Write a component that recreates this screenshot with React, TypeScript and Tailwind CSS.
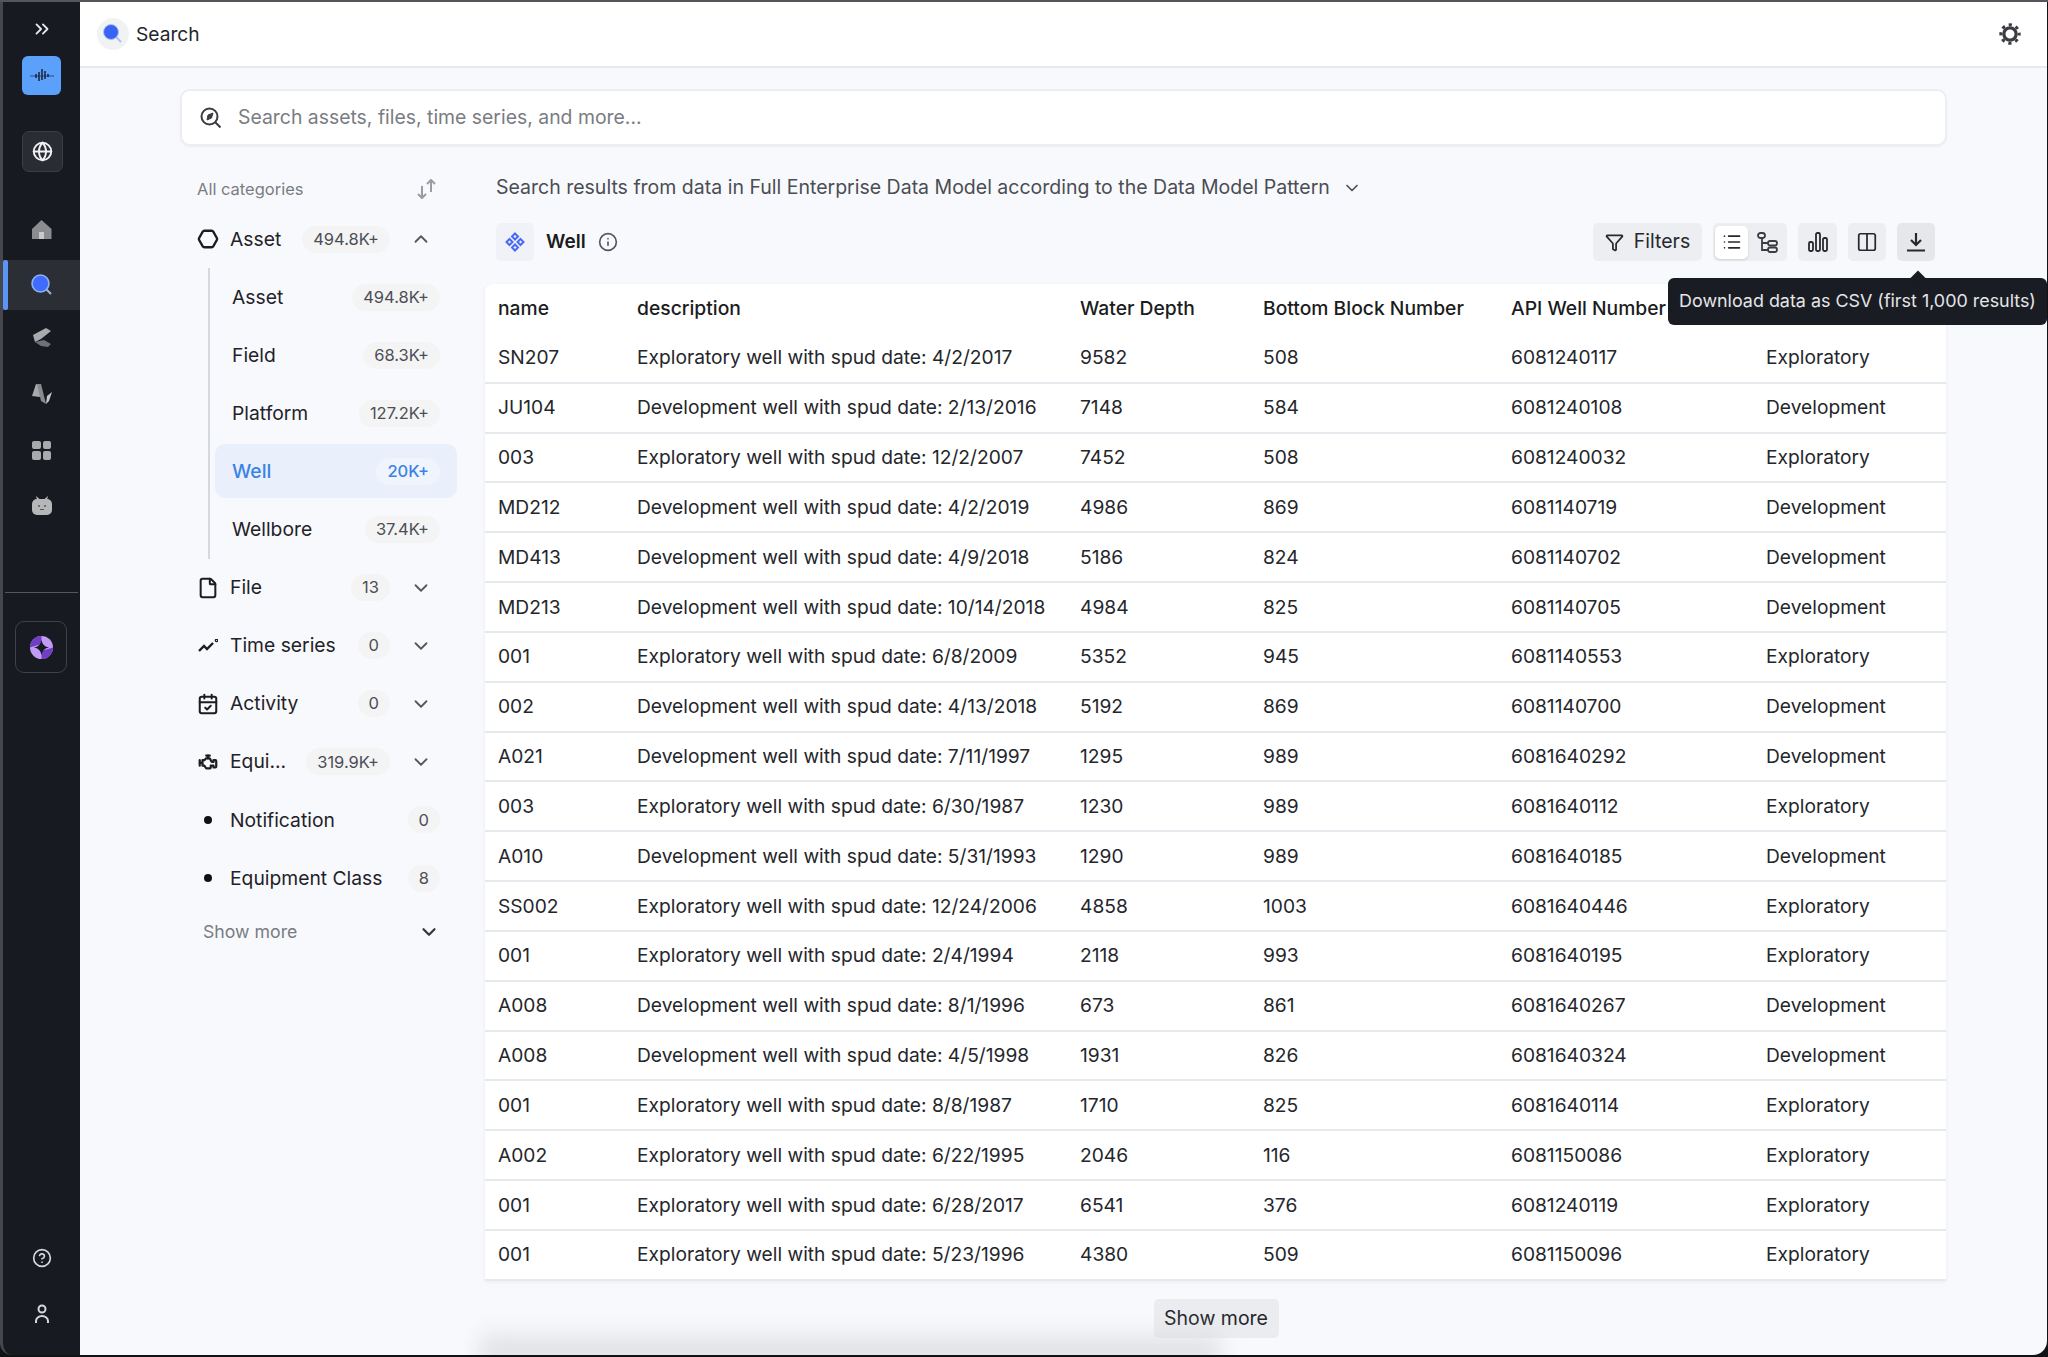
import { ChevronDown, ChevronUp, ChevronsRight, CalendarCheck, CircleHelp, Columns2, File, Filter, Globe, Hexagon, Info, List } from "lucide-react";
import { TbEngine } from "react-icons/tb";

type Well = [string, string, string, string, string, string];

const wells: Well[] = [
  ["SN207", "Exploratory well with spud date: 4/2/2017", "9582", "508", "6081240117", "Exploratory"],
  ["JU104", "Development well with spud date: 2/13/2016", "7148", "584", "6081240108", "Development"],
  ["003", "Exploratory well with spud date: 12/2/2007", "7452", "508", "6081240032", "Exploratory"],
  ["MD212", "Development well with spud date: 4/2/2019", "4986", "869", "6081140719", "Development"],
  ["MD413", "Development well with spud date: 4/9/2018", "5186", "824", "6081140702", "Development"],
  ["MD213", "Development well with spud date: 10/14/2018", "4984", "825", "6081140705", "Development"],
  ["001", "Exploratory well with spud date: 6/8/2009", "5352", "945", "6081140553", "Exploratory"],
  ["002", "Development well with spud date: 4/13/2018", "5192", "869", "6081140700", "Development"],
  ["A021", "Development well with spud date: 7/11/1997", "1295", "989", "6081640292", "Development"],
  ["003", "Exploratory well with spud date: 6/30/1987", "1230", "989", "6081640112", "Exploratory"],
  ["A010", "Development well with spud date: 5/31/1993", "1290", "989", "6081640185", "Development"],
  ["SS002", "Exploratory well with spud date: 12/24/2006", "4858", "1003", "6081640446", "Exploratory"],
  ["001", "Exploratory well with spud date: 2/4/1994", "2118", "993", "6081640195", "Exploratory"],
  ["A008", "Development well with spud date: 8/1/1996", "673", "861", "6081640267", "Development"],
  ["A008", "Development well with spud date: 4/5/1998", "1931", "826", "6081640324", "Development"],
  ["001", "Exploratory well with spud date: 8/8/1987", "1710", "825", "6081640114", "Exploratory"],
  ["A002", "Exploratory well with spud date: 6/22/1995", "2046", "116", "6081150086", "Exploratory"],
  ["001", "Exploratory well with spud date: 6/28/2017", "6541", "376", "6081240119", "Exploratory"],
  ["001", "Exploratory well with spud date: 5/23/1996", "4380", "509", "6081150096", "Exploratory"],
];

const subCategories = [
  { name: "Asset", count: "494.8K+" },
  { name: "Field", count: "68.3K+" },
  { name: "Platform", count: "127.2K+" },
  { name: "Well", count: "20K+", active: true },
  { name: "Wellbore", count: "37.4K+" },
];

function Badge({ children, active }: { children: React.ReactNode; active?: boolean }) {
  return (
    <span
      className={`flex h-[27px] min-w-[32px] items-center justify-center rounded-full px-[11px] text-[16.5px] ${
        active ? "bg-[#eff4fd] text-[#3b82e6]" : "bg-[#f4f4f5] text-[#4b4f55]"
      }`}
    >
      {children}
    </span>
  );
}

function CategoryRow({ icon, label, count, open }: { icon: React.ReactNode; label: string; count: string; open?: boolean }) {
  return (
    <div className="flex h-[58.1px] items-center pl-[17px] text-[#1f2228]">
      <span className="flex w-[22px] items-center justify-center">{icon}</span>
      <span className="ml-[11px] flex-1 text-[19.3px]">{label}</span>
      <Badge>{count}</Badge>
      <span className="ml-[20px] w-[30px] text-[#55585e]">
        {open ? <ChevronUp size={22} /> : <ChevronDown size={22} />}
      </span>
    </div>
  );
}

function DotRow({ label, count }: { label: string; count: string }) {
  return (
    <div className="flex h-[58.1px] items-center pl-[17px] text-[#1f2228]">
      <span className="flex w-[22px] items-center justify-center">
        <span className="h-[8px] w-[8px] rounded-full bg-[#111]" />
      </span>
      <span className="ml-[11px] flex-1 text-[19.3px]">{label}</span>
      <Badge>{count}</Badge>
    </div>
  );
}

function RailIcon({ children }: { children: React.ReactNode }) {
  return <div className="flex h-[56px] items-center justify-center">{children}</div>;
}

function Sidebar() {
  return (
    <aside className="flex w-[80px] shrink-0 flex-col items-stretch rounded-bl-[12px] border-l-[3px] border-[#45474c] bg-[#181a22]">
      <div className="ml-[1px] flex h-[54px] items-center justify-center text-[#e8e9ec]">
        <ChevronsRight size={22} />
      </div>
      <div className="ml-[19px] flex h-[39px] w-[39px] items-center justify-center rounded-[6px] bg-[#5ba0fb]">
        <svg width="26" height="16" viewBox="0 0 26 16" stroke="#1d2a44" fill="none" strokeWidth="1.6">
          <path d="M1 8h24" strokeWidth="0.7" />
          <path d="M7 6v4M10 4v9M13 1v11M16 3v8M19 6v3" />
        </svg>
      </div>
      <div className="ml-[19px] mt-[36px] flex h-[41px] w-[41px] items-center justify-center rounded-[7px] border border-[#3c3e45] bg-[#2a2c33] text-[#f0f1f3]">
        <Globe size={21} strokeWidth={2.2} />
      </div>
      <div className="mb-[3px] mt-[29px] flex h-[56px] items-center justify-center">
        <svg width="21" height="21" viewBox="0 0 21 21">
          <path d="M10.5 1 L20.5 10 V20 H1 V10 Z" fill="#8b8c8f" />
          <rect x="8" y="13" width="5" height="7" fill="#c9c9cb" />
        </svg>
      </div>
      <div className="relative flex h-[50px] items-center justify-center bg-[#2c2e36]">
        <span className="absolute left-0 top-0 h-full w-[5px] rounded-[2px] bg-[#5b96f5]" />
        <svg width="22" height="22" viewBox="0 0 22 22">
          <path d="M14 14l6 6" stroke="#9db6d8" strokeWidth="2" />
          <circle cx="9.5" cy="9.5" r="8.5" fill="#3f6cff" stroke="#8fb2ee" strokeWidth="1.6" />
        </svg>
      </div>
      <RailIcon>
        <svg width="18" height="20" viewBox="0 0 18 20">
          <path d="M0 7 L13 0 L18 3 L8 11 L2 14 Z" fill="#a9aaad" />
          <path d="M2 14 L11 12 L18 16 L15 19 L8 18 Z" fill="#707175" />
        </svg>
      </RailIcon>
      <RailIcon>
        <svg width="20" height="21" viewBox="0 0 20 21">
          <path d="M0 12 L4 0 L8 1 L8 13 Z" fill="#a9aaad" />
          <path d="M5 0 H9 L14 20 L9 17 Z" fill="#8a8b8e" />
          <path d="M14 20 L15 12 L20 8 L17 17 Z" fill="#c4c5c7" />
        </svg>
      </RailIcon>
      <RailIcon>
        <div className="grid h-[19px] w-[19px] grid-cols-2 gap-[2px]">
          <span className="rounded-[2px] bg-[#a9aaad]" />
          <span className="rounded-[2px] bg-[#a9aaad]" />
          <span className="rounded-[2px] bg-[#a9aaad]" />
          <span className="rounded-[2px] bg-[#a9aaad]" />
        </div>
      </RailIcon>
      <RailIcon>
        <svg width="20" height="20" viewBox="0 0 20 20">
          <path d="M5 4 L4 0 L7.5 3 H12.5 L16 0 L15 4 Z" fill="#b5b6b8" />
          <rect x="0" y="3" width="20" height="16" rx="5" fill="#b5b6b8" />
          <circle cx="7" cy="10" r="1" fill="#55565a" />
          <circle cx="13" cy="10" r="1" fill="#55565a" />
          <path d="M8 13.5h4" stroke="#55565a" strokeWidth="1" />
        </svg>
      </RailIcon>
      <div className="ml-[2px] mt-[58px] h-[1px] w-[73px] bg-[#55575c]" />
      <div className="ml-[12px] mt-[28px] flex h-[52px] w-[52px] items-center justify-center rounded-[9px] border border-[#3f4148]">
        <svg width="23" height="23" viewBox="0 0 23 23">
          <circle cx="11.5" cy="11.5" r="11.5" fill="#c19bf5" />
          <path d="M0 11.5 A11.5 11.5 0 0 1 11.5 0 L11.5 8 Z" fill="#6e3fc4" />
          <path d="M23 11.5 A11.5 11.5 0 0 1 11.5 23 L11.5 15 Z" fill="#6e3fc4" />
          <path d="M11.5 4 Q12.5 10.5 19 11.5 Q12.5 12.5 11.5 19 Q10.5 12.5 4 11.5 Q10.5 10.5 11.5 4Z" fill="#181a22" />
        </svg>
      </div>
      <div className="flex-1" />
      <div className="flex h-[56px] items-center justify-center text-[#d6d7da]">
        <CircleHelp size={20} />
      </div>
      <div className="flex h-[56px] items-center justify-center">
        <svg width="16" height="20" viewBox="0 0 16 20" fill="none" stroke="#d6d7da" strokeWidth="2">
          <circle cx="8" cy="5" r="3.5" />
          <path d="M2 19v-2a6 5 0 0 1 12 0v2" />
        </svg>
      </div>
      <div className="h-[13px]" />
    </aside>
  );
}

function CategoryPanel() {
  return (
    <div className="w-[305px] shrink-0 pt-[24px]">
      <div className="w-[260px]">
        <div className="flex h-[40px] items-center justify-between pb-[2px] pl-[17px] pr-[4px] text-[#7a7d83]">
          <span className="text-[16.5px]">All categories</span>
          <svg width="20" height="20" viewBox="0 0 20 20" fill="none" stroke="#9a9ca1" strokeWidth="2">
            <path d="M6 7v12M2 15l4 4 4-4" />
            <path d="M15 13V1M11 5l4-4 4 4" />
          </svg>
        </div>
        <CategoryRow label="Asset" count="494.8K+" open icon={<Hexagon size={22} strokeWidth={2.5} className="rotate-90 text-[#1b1d21]" />} />
      </div>
      <div className="ml-[28px] flex w-[249px] flex-col gap-[4px] border-l-2 border-[#d5d8df] py-[2px]">
        {subCategories.map((c) => (
          <div
            key={c.name}
            className={`ml-[5px] flex h-[54.1px] w-[242px] items-center justify-between rounded-[10px] pl-[17px] pr-[17px] text-[19.3px] ${
              c.active ? "bg-[#e9f0fc] font-medium text-[#3b82e6]" : "text-[#1f2228]"
            }`}
          >
            <span>{c.name}</span>
            <Badge active={c.active}>{c.count}</Badge>
          </div>
        ))}
      </div>
      <div className="w-[260px]">
        <CategoryRow label="File" count="13" icon={<File size={22} strokeWidth={2.2} className="text-[#1b1d21]" />} />
        <CategoryRow
          label="Time series"
          count="0"
          icon={
            <svg width="20" height="14" viewBox="0 0 20 14" fill="none" stroke="#1b1d21" strokeWidth="2.4">
              <path d="M1 12l5-5 3 3 6-6" />
              <circle cx="18.5" cy="1.5" r="0.6" />
            </svg>
          }
        />
        <CategoryRow label="Activity" count="0" icon={<CalendarCheck size={22} strokeWidth={2.2} className="text-[#1b1d21]" />} />
        <CategoryRow label="Equi..." count="319.9K+" icon={<TbEngine size={22} strokeWidth={2.4} className="text-[#1b1d21]" />} />
        <DotRow label="Notification" count="0" />
        <DotRow label="Equipment Class" count="8" />
        <div className="flex h-[50px] items-center justify-between pl-[23px] text-[17.7px] text-[#797c82]">
          <span>Show more</span>
          <ChevronDown size={22} strokeWidth={2.4} className="text-[#33363b]" />
        </div>
      </div>
    </div>
  );
}

function Toolbar() {
  return (
    <div className="flex items-center gap-[11px] text-[#26282d]">
      <div className="flex h-[38px] w-[109px] items-center justify-center gap-[10px] rounded-[5px] bg-[#eceef1] text-[19.5px]">
        <Filter size={19} strokeWidth={2.2} />
        <span>Filters</span>
      </div>
      <div className="flex h-[38px] w-[74px] items-center rounded-[5px] bg-[#eceef1] pl-[2px]">
        <div className="flex h-[33px] w-[33px] items-center justify-center rounded-[5px] bg-white shadow-sm">
          <List size={20} />
        </div>
        <div className="flex flex-1 items-center justify-center text-[#3a3c41]">
          <svg width="21" height="21" viewBox="0 0 21 21" fill="none" stroke="currentColor" strokeWidth="1.8">
            <rect x="1" y="1" width="7" height="5" rx="2.5" />
            <rect x="11" y="9" width="9" height="4.5" rx="2.2" />
            <rect x="11" y="15.5" width="9" height="4.5" rx="2.2" />
            <path d="M5 6v12h6M5 11h6" />
          </svg>
        </div>
      </div>
      <div className="flex h-[38px] w-[39px] items-center justify-center rounded-[5px] bg-[#eceef1]">
        <svg width="20" height="20" viewBox="0 0 20 20" fill="none" stroke="currentColor" strokeWidth="1.8">
          <rect x="1" y="10" width="4" height="9" rx="1.5" />
          <rect x="8" y="1" width="4" height="18" rx="1.5" />
          <rect x="15" y="6" width="4" height="13" rx="1.5" />
        </svg>
      </div>
      <div className="flex h-[38px] w-[38px] items-center justify-center rounded-[5px] bg-[#eceef1]">
        <Columns2 size={22} strokeWidth={1.9} />
      </div>
      <div className="flex h-[38px] w-[38px] items-center justify-center rounded-[5px] bg-[#e6e7ea]">
        <svg width="20" height="20" viewBox="0 0 20 20" fill="none" stroke="currentColor" strokeWidth="2.2">
          <path d="M10 1v11M5 8l5 5 5-5M1 18.5h18" />
        </svg>
      </div>
    </div>
  );
}

function ResultsTable() {
  return (
    <table className="w-full table-fixed rounded-t-[8px] bg-white text-left text-[19.2px] text-[#24262b] shadow-[0_1px_4px_rgba(0,0,0,0.06)]">
      <colgroup>
        <col className="w-[139px]" />
        <col className="w-[443px]" />
        <col className="w-[183px]" />
        <col className="w-[248px]" />
        <col className="w-[255px]" />
        <col />
      </colgroup>
      <thead>
        <tr className="h-[49px] text-[19.3px] text-[#1a1c20]">
          <th className="pl-[13px] font-medium">name</th>
          <th className="pl-[13px] font-medium">description</th>
          <th className="pl-[13px] font-medium">Water Depth</th>
          <th className="pl-[13px] font-medium">Bottom Block Number</th>
          <th className="pl-[13px] font-medium">API Well Number</th>
          <th />
        </tr>
      </thead>
      <tbody>
        {wells.map((w, i) => (
          <tr key={i} className="h-[49.83px] border-b-2 border-[#e8e9ee]">
            {w.map((cell, j) => (
              <td key={j} className="pl-[13px]">
                {cell}
              </td>
            ))}
          </tr>
        ))}
      </tbody>
    </table>
  );
}

export default function App() {
  return (
    <div
      className="h-screen w-screen overflow-hidden border-t-2 border-[#54565c] bg-[#111216] pb-[2px] pr-[1px]"
      style={{ fontFamily: "Inter, 'Noto Sans', sans-serif" }}
    >
      <div className="flex h-full">
        <Sidebar />
        <main className="relative flex min-w-0 flex-1 flex-col overflow-hidden rounded-br-[14px] bg-[#f8f9fc]">
          <header className="flex h-[66px] shrink-0 items-center justify-between border-b-2 border-[#e6e9f1] bg-white pl-[17px] pr-[26px]">
            <div className="flex items-center gap-[7px]">
              <div className="flex h-[32px] w-[32px] items-center justify-center rounded-full bg-[#f1f2f4]">
                <svg width="20" height="20" viewBox="0 0 20 20">
                  <path d="M12 12l6 6" stroke="#a9c4f0" strokeWidth="2" />
                  <circle cx="8" cy="8" r="7.5" fill="#3a63f5" stroke="#a9c4f0" strokeWidth="1" />
                </svg>
              </div>
              <span className="text-[19.2px] text-[#24262b]">Search</span>
            </div>
            <svg width="22" height="22" viewBox="0 0 20 20" fill="none" stroke="#3b3d42">
              <circle cx="10" cy="10" r="5.6" strokeWidth="3" />
              <circle cx="10" cy="10" r="8.4" strokeWidth="2.6" strokeDasharray="3 3.6" strokeDashoffset="1.5" />
            </svg>
          </header>

          <div className="flex-1 pl-[100px] pr-[100px] pt-[21px]">
            <div className="flex h-[57px] items-center rounded-[10px] border-2 border-[#eceef2] bg-white pl-[18px] shadow-[0_1px_2px_rgba(0,0,0,0.05)]">
              <svg width="21" height="21" viewBox="0 0 21 21" fill="none" stroke="#3a3c41" strokeWidth="2">
                <circle cx="9.5" cy="9.5" r="8" />
                <path d="M15.5 15.5l5 5" />
                <path d="M13 6l-1.5 5L7 13l1-5z" fill="#3a3c41" strokeWidth="1" />
              </svg>
              <span className="ml-[17px] text-[19.4px] text-[#797c82]">Search assets, files, time series, and more...</span>
            </div>

            <div className="flex">
              <CategoryPanel />
              <div className="min-w-0 flex-1 pt-[22px]">
                <div className="flex h-[40px] items-center gap-[12px] pl-[11px] text-[19.5px] text-[#4a4d53]">
                  <span>Search results from data in Full Enterprise Data Model according to the Data Model Pattern</span>
                  <ChevronDown size={20} />
                </div>
                <div className="mt-[15px] flex h-[38px] items-center justify-between pl-[11px] pr-[12px]">
                  <div className="flex items-center">
                    <div className="flex h-[38px] w-[38px] items-center justify-center rounded-[5px] bg-[#f0f2f8]">
                      <svg width="20" height="20" viewBox="0 0 20 20" fill="none" stroke="#4a6af0" strokeWidth="2">
                        <path d="M10 1.5l3 3-3 3-3-3z" />
                        <path d="M10 12.5l3 3-3 3-3-3z" />
                        <path d="M4.5 7l3 3-3 3-3-3z" />
                        <path d="M15.5 7l3 3-3 3-3-3z" />
                      </svg>
                    </div>
                    <span className="ml-[12px] text-[19px] font-semibold text-[#1a1c20]">Well</span>
                    <Info size={20} className="ml-[12px] text-[#55585e]" />
                  </div>
                  <Toolbar />
                </div>
                <div className="mt-[23px] pr-[1px]">
                  <ResultsTable />
                </div>
                <div className="mt-[18px] flex justify-center">
                  <div className="flex h-[39px] w-[125px] items-center justify-center rounded-[5px] bg-[#ebecef] text-[19.5px] text-[#24262b]">
                    Show more
                  </div>
                </div>
              </div>
            </div>
          </div>

          {/* bottom shadow from the screen capture */}
          <div className="pointer-events-none absolute -bottom-[6px] left-[400px] h-[36px] w-[740px] bg-gradient-to-t from-[#d4d5d8] to-transparent blur-[10px]" />

          <div className="absolute right-0 top-[276px] flex h-[47px] w-[379px] items-center justify-center rounded-[6px] bg-[#1a1c23] text-[17.9px] text-[#e4e5e8]">
            <span className="absolute -top-[5px] left-[244px] h-[12px] w-[12px] rotate-45 bg-[#1a1c23]" />
            Download data as CSV (first 1,000 results)
          </div>
        </main>
      </div>
    </div>
  );
}
